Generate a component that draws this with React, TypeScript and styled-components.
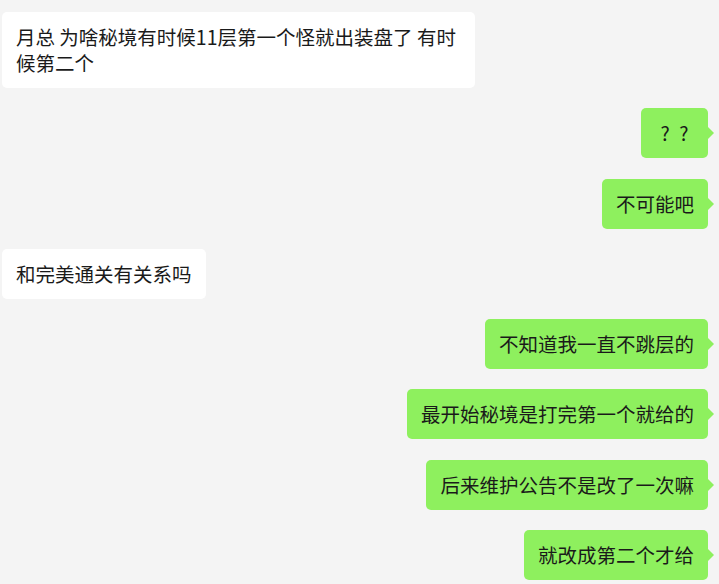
import React from 'react';
import styled, { createGlobalStyle } from 'styled-components';

const GlobalStyle = createGlobalStyle`
  html, body {
    margin: 0;
    padding: 0;
    width: 719px;
    height: 584px;
    overflow: hidden;
    background: #f4f4f4;
  }
`;

const Chat = styled.div`
  display: flex;
  flex-direction: column;
  gap: 20.3px;
  padding: 12px 11px 0 2px;
  height: 584px;
  box-sizing: border-box;
  font-family: 'Noto Sans CJK SC', 'Noto Sans', sans-serif;
`;

const Row = styled.div<{ $mine?: boolean }>`
  display: flex;
  justify-content: ${({ $mine }) => ($mine ? 'flex-end' : 'flex-start')};
`;

const Bubble = styled.div<{ $mine?: boolean; $short?: boolean }>`
  position: relative;
  max-width: 473px;
  min-width: ${({ $short }) => ($short ? '67px' : '0')};
  box-sizing: border-box;
  padding: 12px 14px;
  border-radius: 5px;
  background: ${({ $mine }) => ($mine ? '#8ef05e' : '#ffffff')};
  color: #1a1a1a;
  font-size: 19.5px;
  line-height: 26px;
  text-align: ${({ $short }) => ($short ? 'center' : 'left')};

  ${({ $mine }) =>
    $mine &&
    `
    &::after {
      content: '';
      position: absolute;
      right: -6px;
      top: 50%;
      margin-top: -6px;
      border-style: solid;
      border-width: 6px 0 6px 6px;
      border-color: transparent transparent transparent #8ef05e;
    }
  `}
`;

const messages: { text: string; mine?: boolean; short?: boolean }[] = [
  { text: '月总 为啥秘境有时候11层第一个怪就出装盘了 有时候第二个' },
  { text: '?\u2002?', mine: true, short: true },
  { text: '不可能吧', mine: true },
  { text: '和完美通关有关系吗' },
  { text: '不知道我一直不跳层的', mine: true },
  { text: '最开始秘境是打完第一个就给的', mine: true },
  { text: '后来维护公告不是改了一次嘛', mine: true },
  { text: '就改成第二个才给', mine: true },
];

export default function App() {
  return (
    <>
      <GlobalStyle />
      <Chat>
        {messages.map((m, i) => (
          <Row key={i} $mine={m.mine}>
            <Bubble $mine={m.mine} $short={m.short}>
              {m.text}
            </Bubble>
          </Row>
        ))}
      </Chat>
    </>
  );
}
